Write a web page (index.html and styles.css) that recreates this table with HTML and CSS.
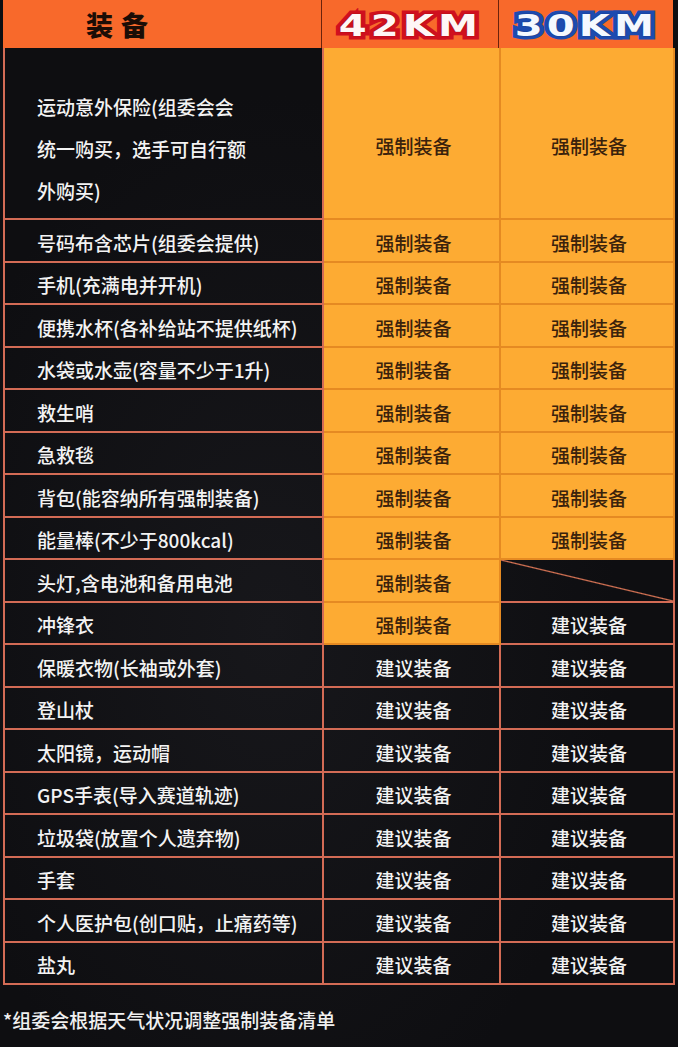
FILE: index.html
```html
<!DOCTYPE html>
<html lang="zh">
<head>
<meta charset="utf-8">
<title>装备清单</title>
<link rel="stylesheet" href="styles.css">
</head>
<body>
<div class="page">
  <div class="table">
    <div class="head">
      <div class="hcell h-name">装备</div>
      <div class="hcell"><span class="km km42">42KM</span></div>
      <div class="hcell"><span class="km km30">30KM</span></div>
    </div>
    <div class="body">
      <div class="cell name first"><span class="multi">运动意外保险(组委会会<br>统一购买，选手可自行额<br>外购买)</span></div>
      <div class="cell req first">强制装备</div>
      <div class="cell req first">强制装备</div>

      <div class="cell name">号码布含芯片(组委会提供)</div><div class="cell req">强制装备</div><div class="cell req">强制装备</div>
      <div class="cell name">手机(充满电并开机)</div><div class="cell req">强制装备</div><div class="cell req">强制装备</div>
      <div class="cell name">便携水杯(各补给站不提供纸杯)</div><div class="cell req">强制装备</div><div class="cell req">强制装备</div>
      <div class="cell name">水袋或水壶(容量不少于1升)</div><div class="cell req">强制装备</div><div class="cell req">强制装备</div>
      <div class="cell name">救生哨</div><div class="cell req">强制装备</div><div class="cell req">强制装备</div>
      <div class="cell name">急救毯</div><div class="cell req">强制装备</div><div class="cell req">强制装备</div>
      <div class="cell name">背包(能容纳所有强制装备)</div><div class="cell req">强制装备</div><div class="cell req">强制装备</div>
      <div class="cell name">能量棒(不少于800kcal)</div><div class="cell req">强制装备</div><div class="cell req">强制装备</div>
      <div class="cell name">头灯,含电池和备用电池</div><div class="cell req">强制装备</div><div class="cell sug none"></div>
      <div class="cell name">冲锋衣</div><div class="cell req">强制装备</div><div class="cell sug">建议装备</div>
      <div class="cell name">保暖衣物(长袖或外套)</div><div class="cell sug">建议装备</div><div class="cell sug">建议装备</div>
      <div class="cell name">登山杖</div><div class="cell sug">建议装备</div><div class="cell sug">建议装备</div>
      <div class="cell name">太阳镜，运动帽</div><div class="cell sug">建议装备</div><div class="cell sug">建议装备</div>
      <div class="cell name">GPS手表(导入赛道轨迹)</div><div class="cell sug">建议装备</div><div class="cell sug">建议装备</div>
      <div class="cell name">垃圾袋(放置个人遗弃物)</div><div class="cell sug">建议装备</div><div class="cell sug">建议装备</div>
      <div class="cell name">手套</div><div class="cell sug">建议装备</div><div class="cell sug">建议装备</div>
      <div class="cell name">个人医护包(创口贴，止痛药等)</div><div class="cell sug">建议装备</div><div class="cell sug">建议装备</div>
      <div class="cell name">盐丸</div><div class="cell sug">建议装备</div><div class="cell sug">建议装备</div>
    </div>
  </div>
  <p class="note">*组委会根据天气状况调整强制装备清单</p>
</div>
</body>
</html>
```

FILE: styles.css
```css
* { box-sizing: border-box; }
html, body { margin: 0; padding: 0; }
body {
  background: #0e0e11;
  font-family: "Noto Sans CJK SC", "Noto Sans", sans-serif;
  width: 678px;
  height: 1047px;
  overflow: hidden;
}
.page {
  padding: 0 5px 0 3px;
  background: radial-gradient(ellipse at 40% 60%, #17171b 0%, #0e0e11 60%);
  height: 1047px;
}
.table { width: 670px; }
.head {
  display: grid;
  grid-template-columns: 319px 177px 174px;
  height: 48px;
  background: #f8692b;
}
.hcell {
  display: flex;
  align-items: center;
  justify-content: center;
  border-right: 1px solid #6b230c;
}
.hcell:last-child { border-right: none; }
.h-name {
  font-size: 27px;
  font-weight: 900;
  color: #1b0d06;
  letter-spacing: 8px;
  padding-right: 82px;
}
.km {
  font-family: "DejaVu Sans", sans-serif;
  font-weight: bold;
  font-size: 30px;
  letter-spacing: 3px;
  color: #fff6f6;
  paint-order: stroke fill;
  display: inline-block;
  transform: scaleX(1.34);
  line-height: 1;
  margin-top: 4px;
}
.km42 {
  -webkit-text-stroke: 7px #d0101e;
  text-shadow: 0 0 1px #6d0a0a;
}
.km30 {
  -webkit-text-stroke: 7px #1d4bb0;
  color: #f4f8ff;
  text-shadow: 0 0 1px #0b1f55;
}
.body {
  display: grid;
  grid-template-columns: 319px 177px 174px;
  grid-template-rows: 172px;
  grid-auto-rows: 42.5px;
  border-left: 2px solid #d36b55;
}
.cell {
  display: flex;
  align-items: center;
  font-size: 19px;
  font-weight: 500;
  border-right: 2px solid #d36b55;
  border-bottom: 2px solid #d36b55;
  padding-top: 4px;
}
.name {
  color: #f3f3f3;
  padding-left: 32px;
}
.multi { line-height: 42px; }
.first { padding-top: 24px; }
.name.first { padding-top: 32px; }
.req {
  background: #fdab33;
  color: #3a220c;
  justify-content: center;
  padding-left: 4px;
  border-right-color: #e58a22;
  border-bottom-color: #e58a22;
}
.sug {
  color: #f3f3f3;
  justify-content: center;
  padding-left: 4px;
}
.none {
  background: linear-gradient(to bottom left, transparent calc(50% - 1.2px), #dc7656 50%, transparent calc(50% + 1.2px));
}
.note {
  margin: 0;
  padding-top: 22px;
  font-size: 19px;
  font-weight: 500;
  line-height: 26px;
  color: #f0f0f0;
}
```
